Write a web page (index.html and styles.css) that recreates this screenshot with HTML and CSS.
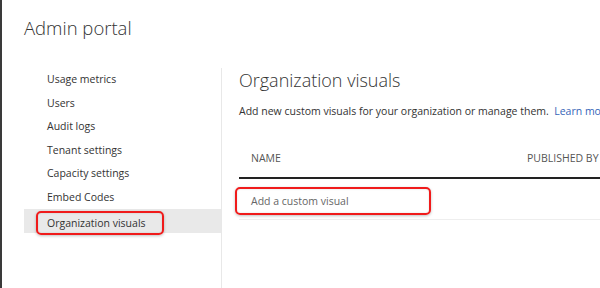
FILE: index.html
```
<!DOCTYPE html>
<html>
  <head>
    <title>Admin portal</title>
    <meta http-equiv="Content-Type" content="text/html; charset=UTF-8"/>
    <link rel="stylesheet" href="styles.css">
  </head>
  <body>
    <div class="frame">
      <h1 class="portal-title">Admin portal</h1>
      <div class="portal">
        <ul class="side-nav">
          <li class="nav-item">Usage metrics</li>
          <li class="nav-item">Users</li>
          <li class="nav-item">Audit logs</li>
          <li class="nav-item">Tenant settings</li>
          <li class="nav-item">Capacity settings</li>
          <li class="nav-item">Embed Codes</li>
          <li class="nav-item selected"><span class="callout nav-callout">Organization visuals</span></li>
        </ul>
        <div class="content">
          <h2 class="content-title">Organization visuals</h2>
          <p class="content-desc">Add new custom visuals for your organization or manage them.&nbsp; <a class="learn" href="#">Learn more</a></p>
          <div class="table-head">
            <span class="col-name">NAME</span>
            <span class="col-pub">PUBLISHED BY</span>
          </div>
          <div class="table-row">
            <span class="callout add-visual">Add a custom visual</span>
          </div>
        </div>
      </div>
    </div>
  </body>
</html>
```

FILE: styles.css
```
body {
  margin: 0;
  font-family: 'Open Sans', 'Noto Sans', sans-serif;
  color: #333;
  background: #fff;
  overflow: hidden;
}

.frame {
  height: 288px;
  border-left: 2px solid #3a3a3a;
  padding-left: 22px;
  box-sizing: border-box;
  overflow: hidden;
}

.portal-title {
  margin: 0;
  padding-top: 15px;
  height: 68px;
  box-sizing: border-box;
  font-size: 18.5px;
  font-weight: 300;
  line-height: 26px;
  color: #333;
}

.portal {
  display: flex;
  height: 220px;
}

.side-nav {
  list-style: none;
  margin: 0;
  padding: 0;
  width: 197px;
  border-right: 1px solid #e8e8e8;
  flex-shrink: 0;
}

.nav-item {
  height: 23.5px;
  line-height: 23.5px;
  padding-left: 23px;
  font-size: 10.5px;
  color: #333;
  white-space: nowrap;
}

.nav-item.selected {
  background: #e9e9e9;
  padding-left: 12px;
}

.callout {
  display: inline-block;
  border: 2px solid #f01b1b;
  border-radius: 5px;
  box-shadow: 0 1px 3px rgba(0, 0, 0, 0.25), inset 0 0 2px rgba(0, 0, 0, 0.15);
  box-sizing: border-box;
}

.nav-callout {
  position: relative;
  top: 2px;
  height: 24px;
  line-height: 20px;
  padding: 0 16px 0 9px;
}

.content {
  flex: 1;
  padding-left: 17px;
  min-width: 0;
}

.content-title {
  margin: 0;
  padding-top: 0;
  font-size: 18px;
  font-weight: 300;
  line-height: 24px;
  color: #333;
  white-space: nowrap;
}

.content-desc {
  margin: 11px 0 0;
  font-size: 10.5px;
  line-height: 16px;
  white-space: nowrap;
}

.learn {
  color: #3565b8;
  text-decoration: none;
}

.table-head {
  display: flex;
  margin-top: 31px;
  padding-left: 12px;
  height: 27px;
  border-bottom: 2px solid #222;
  font-size: 10.5px;
  line-height: 16px;
  color: #555;
  white-space: nowrap;
}

.col-name {
  width: 276px;
  flex-shrink: 0;
}

.table-row {
  height: 41px;
  border-bottom: 1px solid #eee;
  padding-top: 8px;
  box-sizing: border-box;
}

.add-visual {
  margin-left: -4px;
  width: 196px;
  height: 28px;
  line-height: 24px;
  padding-left: 14px;
  font-size: 10.5px;
  color: #666;
}
```
